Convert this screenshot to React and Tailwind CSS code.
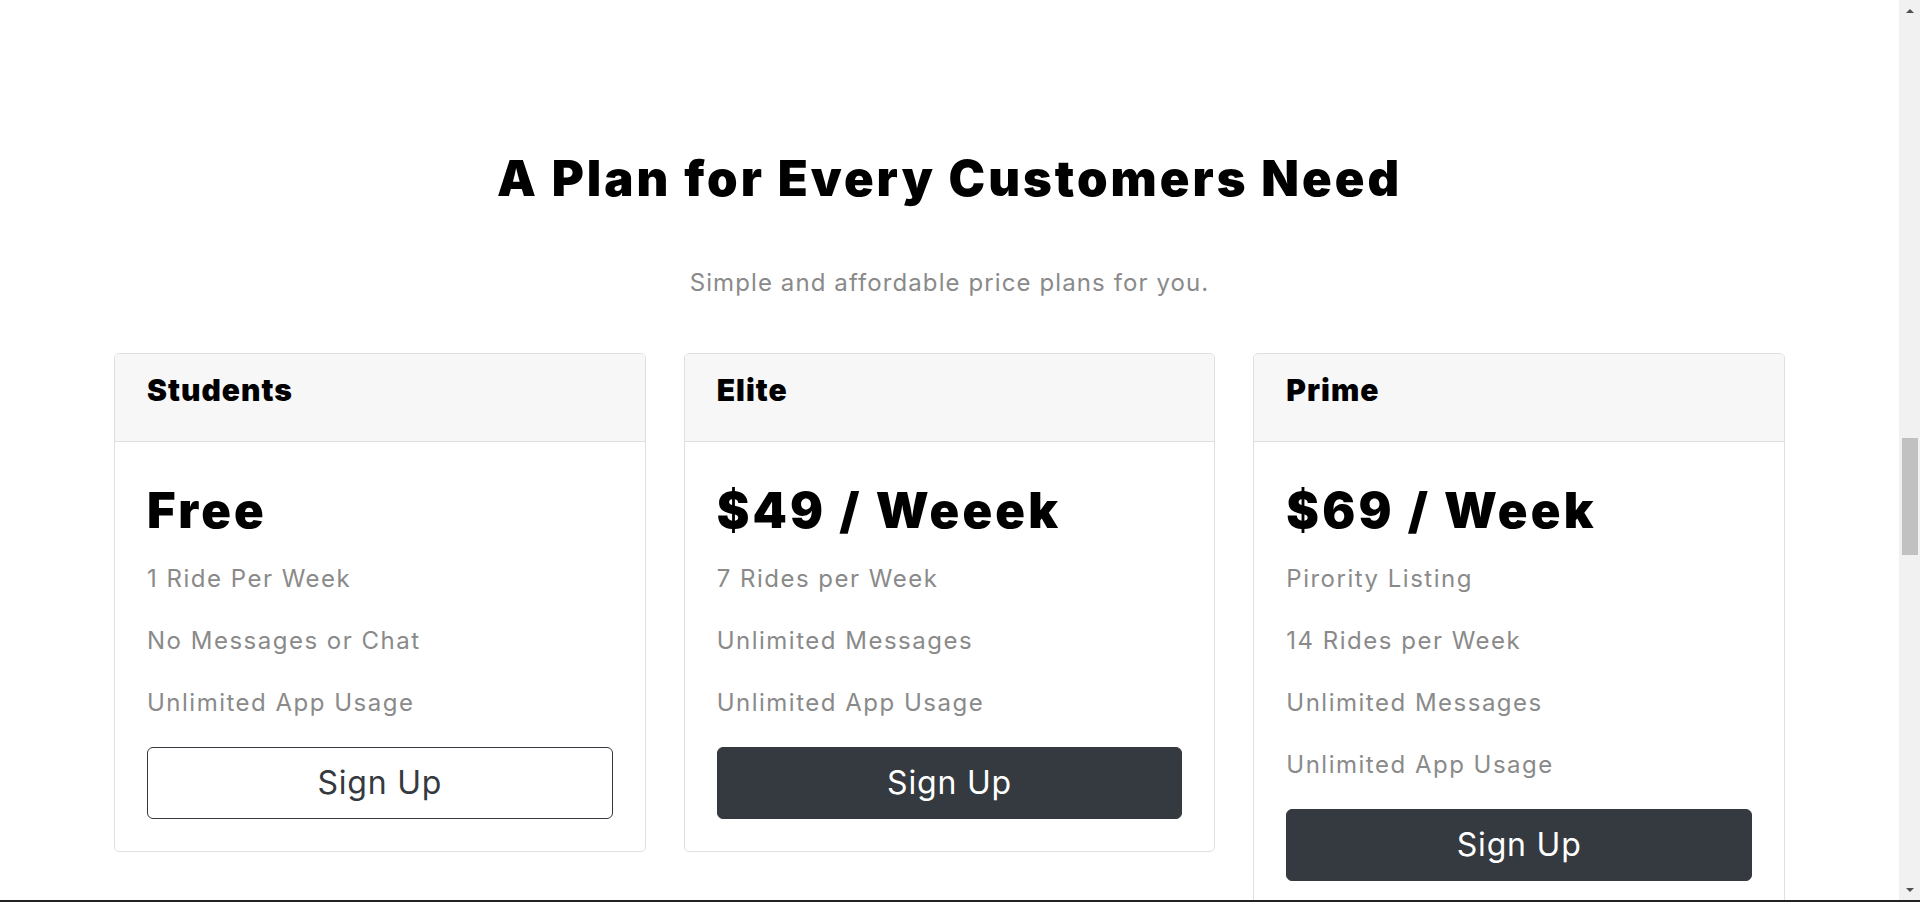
const plans = [
  {
    name: 'Students',
    price: 'Free',
    features: ['1 Ride Per Week', 'No Messages or Chat', 'Unlimited App Usage'],
    outline: true,
  },
  {
    name: 'Elite',
    price: '$49 / Weeek',
    features: ['7 Rides per Week', 'Unlimited Messages', 'Unlimited App Usage'],
    outline: false,
  },
  {
    name: 'Prime',
    price: '$69 / Week',
    features: ['Pirority Listing', '14 Rides per Week', 'Unlimited Messages', 'Unlimited App Usage'],
    outline: false,
  },
];

function PlanCard({ plan }) {
  return (
    <div className="rounded-[5px] border border-[#dfdfdf] bg-white overflow-hidden">
      {/* Header */}
      <div className="h-[88px] border-b border-[#dfdfdf] bg-[#f7f7f7] px-8 pt-[21px]">
        <h4 className="text-[30px] leading-none font-black text-black tracking-[1px]">{plan.name}</h4>
      </div>

      {/* Body */}
      <div className="px-8 pt-[44px] pb-8">
        <h1 className="text-[49px] leading-none font-black text-black tracking-[3.2px]">{plan.price}</h1>
        <ul className="mt-[13px]">
          {plan.features.map((f) => (
            <li key={f} className="text-[24px] leading-[62px] tracking-[1.5px] text-[#8a8a8a]">
              {f}
            </li>
          ))}
        </ul>
        <button
          type="button"
          className={
            plan.outline
              ? 'mt-[13px] h-[72px] w-full rounded-[6px] border border-[#343a40] bg-white text-[32px] tracking-[0.8px] text-[#343a40]'
              : 'mt-[13px] h-[72px] w-full rounded-[6px] border border-[#343a40] bg-[#343a40] text-[32px] tracking-[0.8px] text-white'
          }
        >
          Sign Up
        </button>
      </div>
    </div>
  );
}

function Scrollbar() {
  return (
    <div className="w-[21px] shrink-0 bg-[#f1f1f1] flex flex-col items-center">
      <div className="h-[21px] flex items-center justify-center">
        <div className="w-0 h-0 border-l-[4px] border-r-[4px] border-b-[4px] border-l-transparent border-r-transparent border-b-[#505050]"></div>
      </div>
      <div className="h-[417px]"></div>
      <div className="h-[117px] w-[16px] bg-[#c1c1c1]"></div>
      <div className="flex-1"></div>
      <div className="h-[21px] flex items-center justify-center">
        <div className="w-0 h-0 border-l-[4px] border-r-[4px] border-t-[4px] border-l-transparent border-r-transparent border-t-[#505050]"></div>
      </div>
    </div>
  );
}

export default function App() {
  return (
    <div className="h-[902px] flex flex-col bg-white font-['Inter',sans-serif] overflow-hidden">
      <div className="flex-1 flex min-h-0">
        <main className="flex-1 min-w-0 overflow-hidden pt-[154px]">
          <h2 className="text-center text-[49px] leading-none font-black text-black tracking-[3px]">
            A Plan for Every Customers Need
          </h2>
          <p className="mt-[68px] text-center text-[24px] leading-[24px] tracking-[1.1px] text-[#8a8a8a]">
            Simple and affordable price plans for you.
          </p>

          <div className="mt-[58px] mx-auto w-[1671px] grid grid-cols-3 gap-[38px] items-start">
            {plans.map((p) => (
              <PlanCard key={p.name} plan={p} />
            ))}
          </div>
        </main>
        <Scrollbar />
      </div>
      <div className="h-[2px] shrink-0 bg-[#222]"></div>
    </div>
  );
}
